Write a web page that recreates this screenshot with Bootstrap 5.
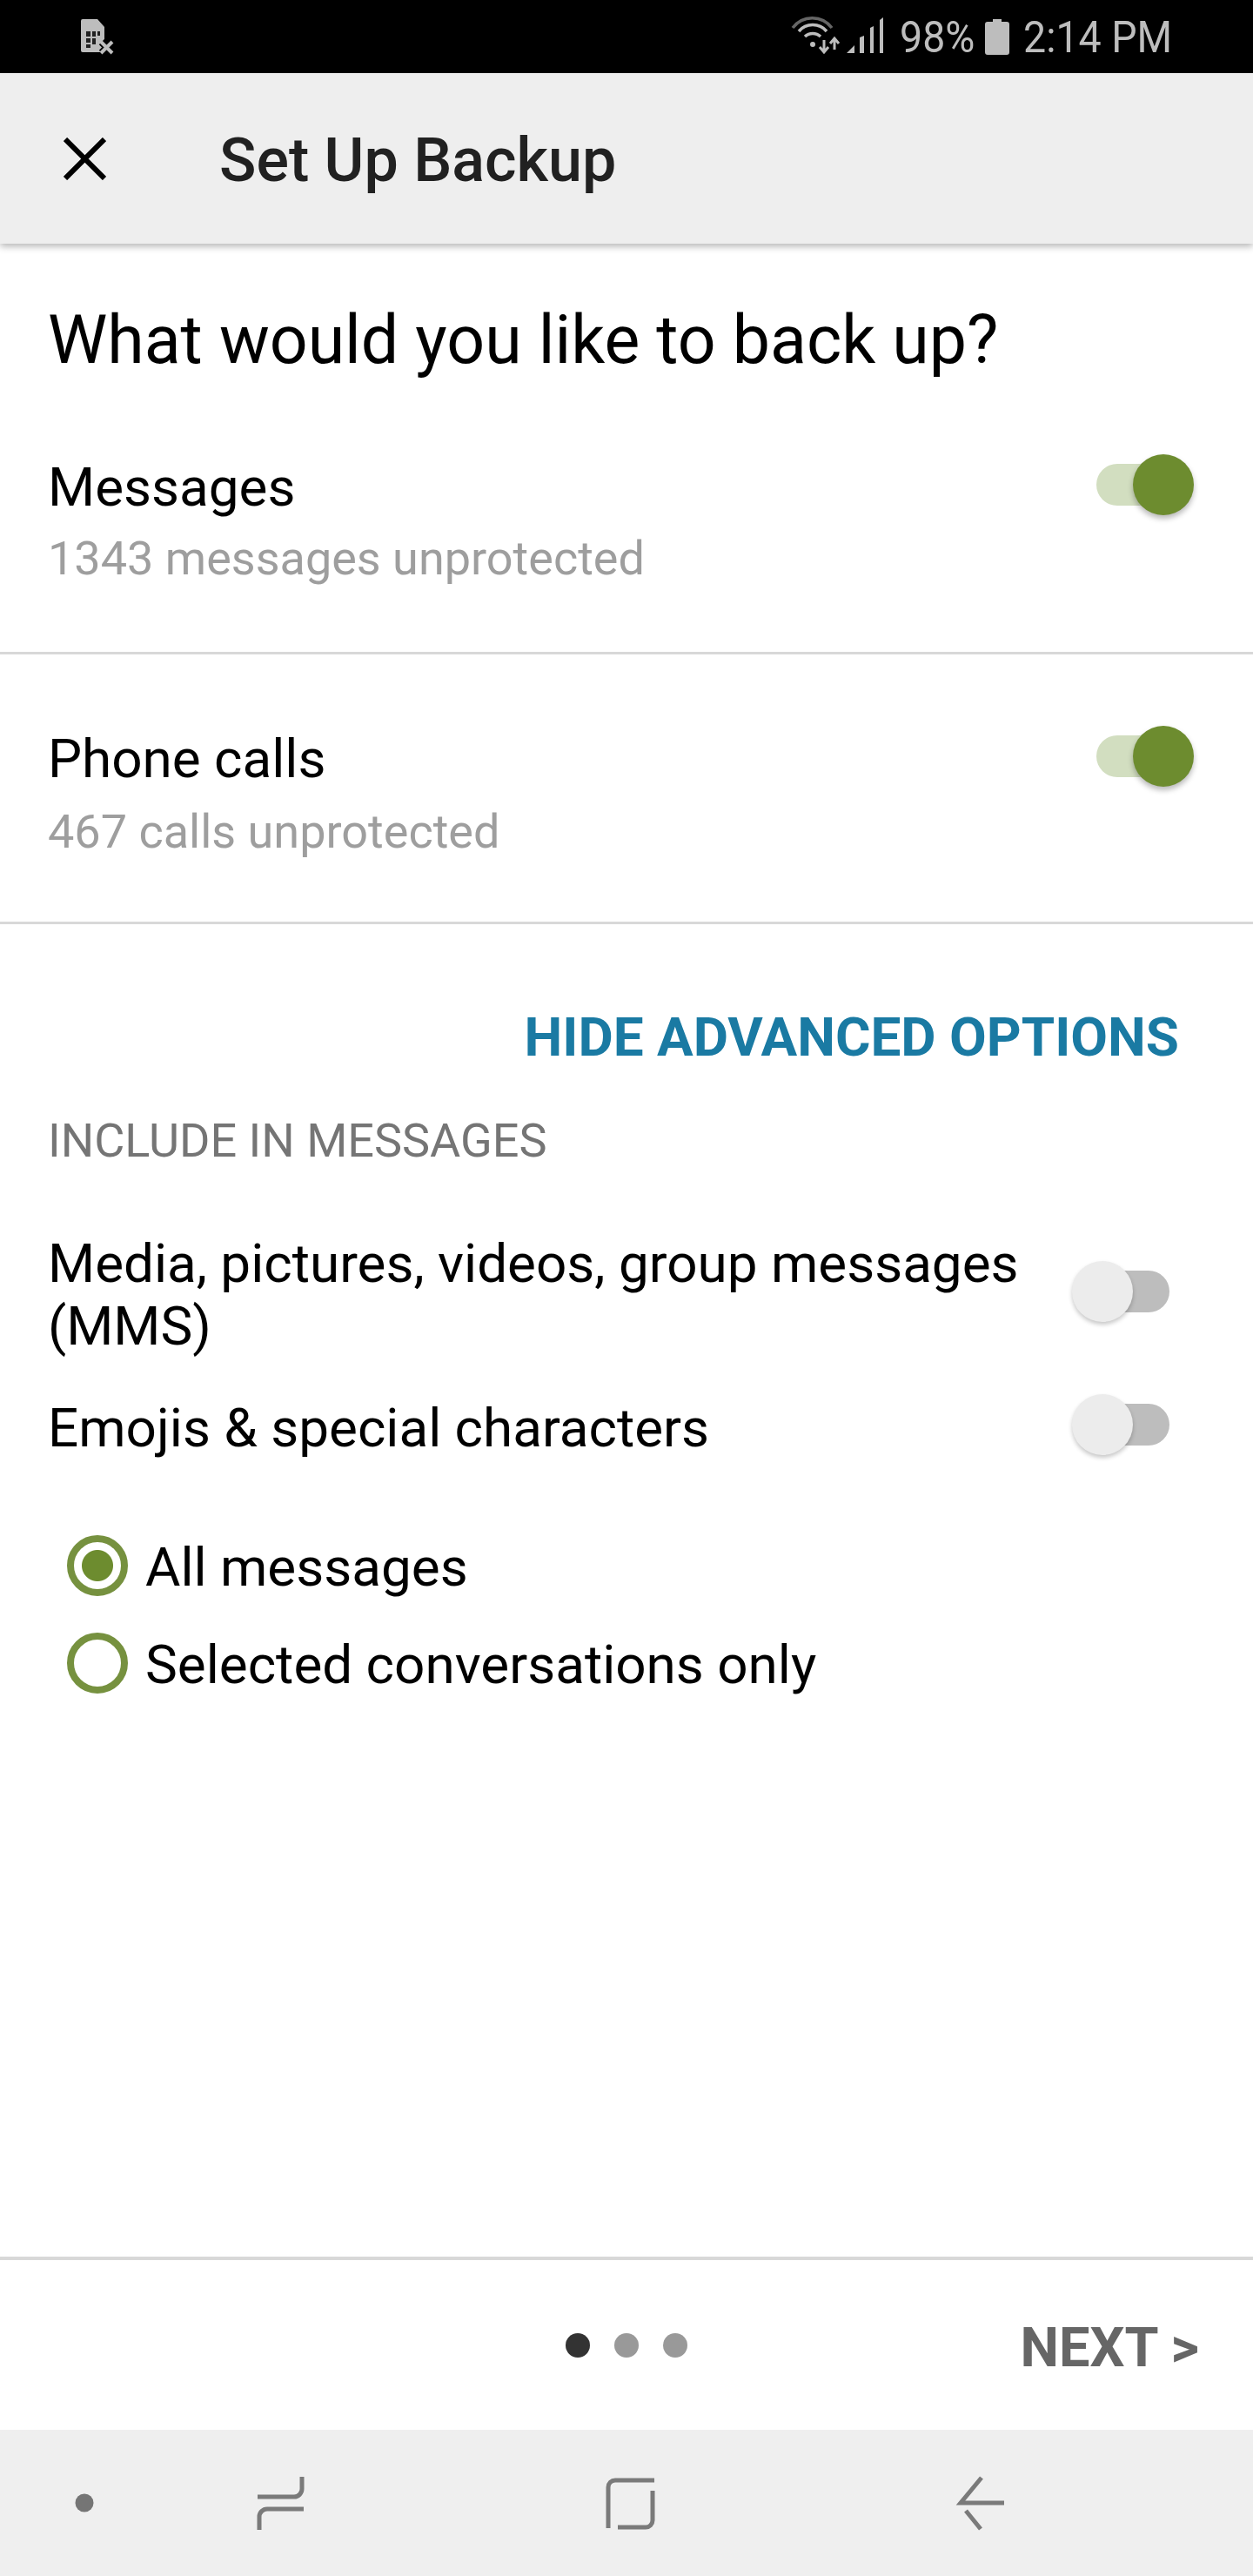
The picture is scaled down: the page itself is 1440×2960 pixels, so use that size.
<!DOCTYPE html>
<html lang="en">
<head>
  <meta charset="UTF-8">
  <meta name="viewport" content="width=device-width, initial-scale=1">
  <title>Set Up Backup</title>
  <link href="https://cdn.jsdelivr.net/npm/bootstrap@5.3.3/dist/css/bootstrap.min.css" rel="stylesheet">
  <style>
    body { font-family: Roboto, "Liberation Sans", sans-serif; color: #000; background: #fff; }
    .status-bar { height: 84px; background: #000; color: #bdbdbd; padding-left: 93px; padding-right: 98px; }
    .status-txt { font-size: 50px; line-height: 84px; padding-top: 2px; display: inline-block; transform: scaleX(.93); transform-origin: left center; }
    .status-pct { width: 82px; margin-left: 14px; margin-right: 16px; }
    .status-time { width: 166px; margin-left: 16px; white-space: nowrap; }
    .app-head { height: 196px; background: #eee; box-shadow: 0 3px 8px rgba(0,0,0,.3); padding-left: 73px; position: relative; }
    .app-title { font-size: 70px; font-weight: 500; color: #212121; margin: 0 0 0 130px; padding-top: 4px; line-height: 1; }
    .page-title { font-size: 77px; font-weight: 400; line-height: 90px; margin: 66px 0 0 55px; }
    .opt-row { padding-left: 55px; padding-right: 68px; border-bottom: 3px solid #d8d8d8; }
    .opt-row-a { padding-top: 86px; padding-bottom: 77px; }
    .opt-row-b { padding-top: 82px; padding-bottom: 73px; }
    .opt-name { font-size: 62px; line-height: 72px; }
    .opt-row .opt-name { margin-top: 2px; }
    .opt-sub { font-size: 54px; line-height: 60px; color: #9e9e9e; margin-top: 18px; }
    .opt-row-a .opt-sub { margin-top: 16px; }
    .hide-link { font-size: 62px; font-weight: 700; line-height: 72px; color: #1a7aa3; text-align: right; margin: 94px 85px 0 0; }
    .inc-head { font-size: 54px; line-height: 60px; color: #757575; margin: 53px 0 0 55px; }
    .adv-row { padding-left: 55px; padding-right: 96px; }
    .adv-media { margin-top: 75px; }
    .adv-media .sw { margin-top: 33px; }
    .adv-emoji { margin-top: 45px; }
    .adv-emoji .sw { margin-top: -3px; }
    .adv-media .opt-name { width: 1130px; }
    .sw { width: 112px; height: 70px; position: relative; flex-shrink: 0; }
    .sw-track { position: absolute; top: 11px; width: 80px; height: 48px; border-radius: 24px; }
    .sw-thumb { position: absolute; top: 0; width: 70px; height: 70px; border-radius: 50%; }
    .sw-on .sw-track { left: 0; background: #d2dec0; }
    .sw-on .sw-thumb { right: 0; background: #6d8c2f; box-shadow: 0 4px 6px rgba(0,0,0,.28); }
    .sw-off .sw-track { right: 0; background: #bdbdbd; }
    .sw-off .sw-thumb { left: 0; background: #ececec; box-shadow: 0 3px 5px rgba(0,0,0,.22); }
    .radio-list { margin: 85px 0 0 77px; gap: 38px; }
    .radio-line { gap: 20px; margin: 0; padding: 0; min-height: 0; }
    .radio-line .form-check-input { width: 70px; height: 70px; margin: 0; float: none; flex-shrink: 0; border: 8px solid #76913f; background: #fff; box-shadow: none; }
    .radio-line .form-check-input:checked { background: radial-gradient(circle, #6d8c2f 0, #6d8c2f 17.5px, #fff 18.5px); border-color: #76913f; }
    .radio-line .form-check-label { font-size: 62px; line-height: 70px; padding-top: 4px; opacity: 1; color: #000; }
    .foot-rule { border-top: 4px solid #d8d8d8; height: 199px; display: grid; grid-template-columns: 1fr auto 1fr; }
    .pager-dot { width: 28px; height: 28px; border-radius: 50%; background: #999; }
    .pager-dot.on { background: #333; }
    .pager { gap: 28px; }
    .next-btn { font-size: 63px; font-weight: 700; color: #666; justify-self: end; padding: 6px 62px 0 0; line-height: 1; }
    .nav-bar { height: 168px; background: #efefef; }
    .nav-bar svg { display: block; }
  </style>
</head>
<body class="vh-100 d-flex flex-column overflow-hidden">

  <!-- Status bar -->
  <div class="status-bar d-flex align-items-center flex-shrink-0">
    <svg width="40" height="42" viewBox="93 21 40 42">
      <path d="M95 22h17l8 9v19l-2 3v7H95a2 2 0 0 1-2-2V24a2 2 0 0 1 2-2z" fill="#bdbdbd"/>
      <path d="M99 36h5v6h-5zM106 36h4v6h-4zM112 36h3v5h-3zM99 44h5v5h-5zM106 44h4v7h-4zM99 51h5v4h-5z" fill="#222"/>
      <path d="M117 48l13 13M130 48l-13 13" stroke="#000" stroke-width="9"/>
      <path d="M116 48l13 13M129 48l-13 13" stroke="#bdbdbd" stroke-width="4"/>
    </svg>
    <div class="ms-auto d-flex align-items-center">
      <svg width="115" height="50" viewBox="905 18 115 50">
        <path d="M911 33a28 28 0 0 1 45 0" fill="none" stroke="#666" stroke-width="3.5"/>
        <path d="M918 37a21 21 0 0 1 32 0" fill="none" stroke="#bdbdbd" stroke-width="3.5"/>
        <path d="M925 43a13 13 0 0 1 18 0" fill="none" stroke="#bdbdbd" stroke-width="3.5"/>
        <circle cx="934" cy="52" r="3" fill="#bdbdbd"/>
        <path d="M947 47v13M942 55l5 6 5-6M959 58V46M954 51l5-6 5 6" fill="none" stroke="#bdbdbd" stroke-width="3"/>
        <path d="M973 62l9-9v9zM988 62V44l5-2v20zM1000 62V33l4-2v31zM1011 62V24l4-3v41z" fill="#bdbdbd"/>
      </svg>
      <span class="status-txt status-pct">98%</span>
      <svg width="28" height="42" viewBox="0 0 28 42">
        <path d="M9 1h10v3h6a3 3 0 0 1 3 3v32a3 3 0 0 1-3 3H3a3 3 0 0 1-3-3V7a3 3 0 0 1 3-3h6z" fill="#bdbdbd"/>
      </svg>
      <span class="status-txt status-time">2:14 PM</span>
    </div>
  </div>

  <!-- App bar -->
  <div class="app-head d-flex align-items-center flex-shrink-0">
    <svg width="49" height="49" viewBox="0 0 49 49">
      <path d="M2 2l45 45M47 2L2 47" stroke="#000" stroke-width="6" fill="none"/>
    </svg>
    <h1 class="app-title">Set Up Backup</h1>
  </div>

  <!-- Main -->
  <div class="flex-grow-1">
    <h2 class="page-title">What would you like to back up?</h2>

    <div class="opt-row opt-row-a d-flex justify-content-between align-items-start">
      <div>
        <div class="opt-name">Messages</div>
        <div class="opt-sub">1343 messages unprotected</div>
      </div>
      <div class="sw sw-on"><div class="sw-track"></div><div class="sw-thumb"></div></div>
    </div>

    <div class="opt-row opt-row-b d-flex justify-content-between align-items-start">
      <div>
        <div class="opt-name">Phone calls</div>
        <div class="opt-sub">467 calls unprotected</div>
      </div>
      <div class="sw sw-on"><div class="sw-track"></div><div class="sw-thumb"></div></div>
    </div>

    <div class="hide-link">HIDE ADVANCED OPTIONS</div>
    <div class="inc-head">INCLUDE IN MESSAGES</div>

    <div class="adv-row adv-media d-flex justify-content-between align-items-start">
      <div class="opt-name">Media, pictures, videos, group messages (MMS)</div>
      <div class="sw sw-off"><div class="sw-track"></div><div class="sw-thumb"></div></div>
    </div>
    <div class="adv-row adv-emoji d-flex justify-content-between align-items-start">
      <div class="opt-name">Emojis &amp; special characters</div>
      <div class="sw sw-off"><div class="sw-track"></div><div class="sw-thumb"></div></div>
    </div>

    <div class="radio-list d-flex flex-column">
      <div class="form-check radio-line d-flex align-items-center">
        <input class="form-check-input" type="radio" name="scope" id="scopeAll" checked>
        <label class="form-check-label" for="scopeAll">All messages</label>
      </div>
      <div class="form-check radio-line d-flex align-items-center">
        <input class="form-check-input" type="radio" name="scope" id="scopeSel">
        <label class="form-check-label" for="scopeSel">Selected conversations only</label>
      </div>
    </div>
  </div>

  <!-- Footer -->
  <div class="foot-rule align-items-center flex-shrink-0">
    <div></div>
    <div class="pager d-flex">
      <div class="pager-dot on"></div><div class="pager-dot"></div><div class="pager-dot"></div>
    </div>
    <div class="next-btn">NEXT &gt;</div>
  </div>

  <!-- Nav bar -->
  <div class="nav-bar flex-shrink-0">
    <svg width="1440" height="168" viewBox="0 2792 1440 168">
      <circle cx="97" cy="2876" r="10.500" fill="#757575"/>
      <g fill="none" stroke="#7a7a7a" stroke-width="5">
        <path d="M296 2869h42a9 9 0 0 0 9-9v-14"/>
        <path d="M349 2883h-42a9 9 0 0 0-9 9v15"/>
        <path d="M699 2905v-47a8 8 0 0 1 8-8h45"/>
        <path d="M750 2862v34a8 8 0 0 1-8 8h-32"/>
        <path d="M1128 2847l-24 29h50"/>
        <path d="M1110 2885l17 21"/>
      </g>
    </svg>
  </div>

</body>
</html>
